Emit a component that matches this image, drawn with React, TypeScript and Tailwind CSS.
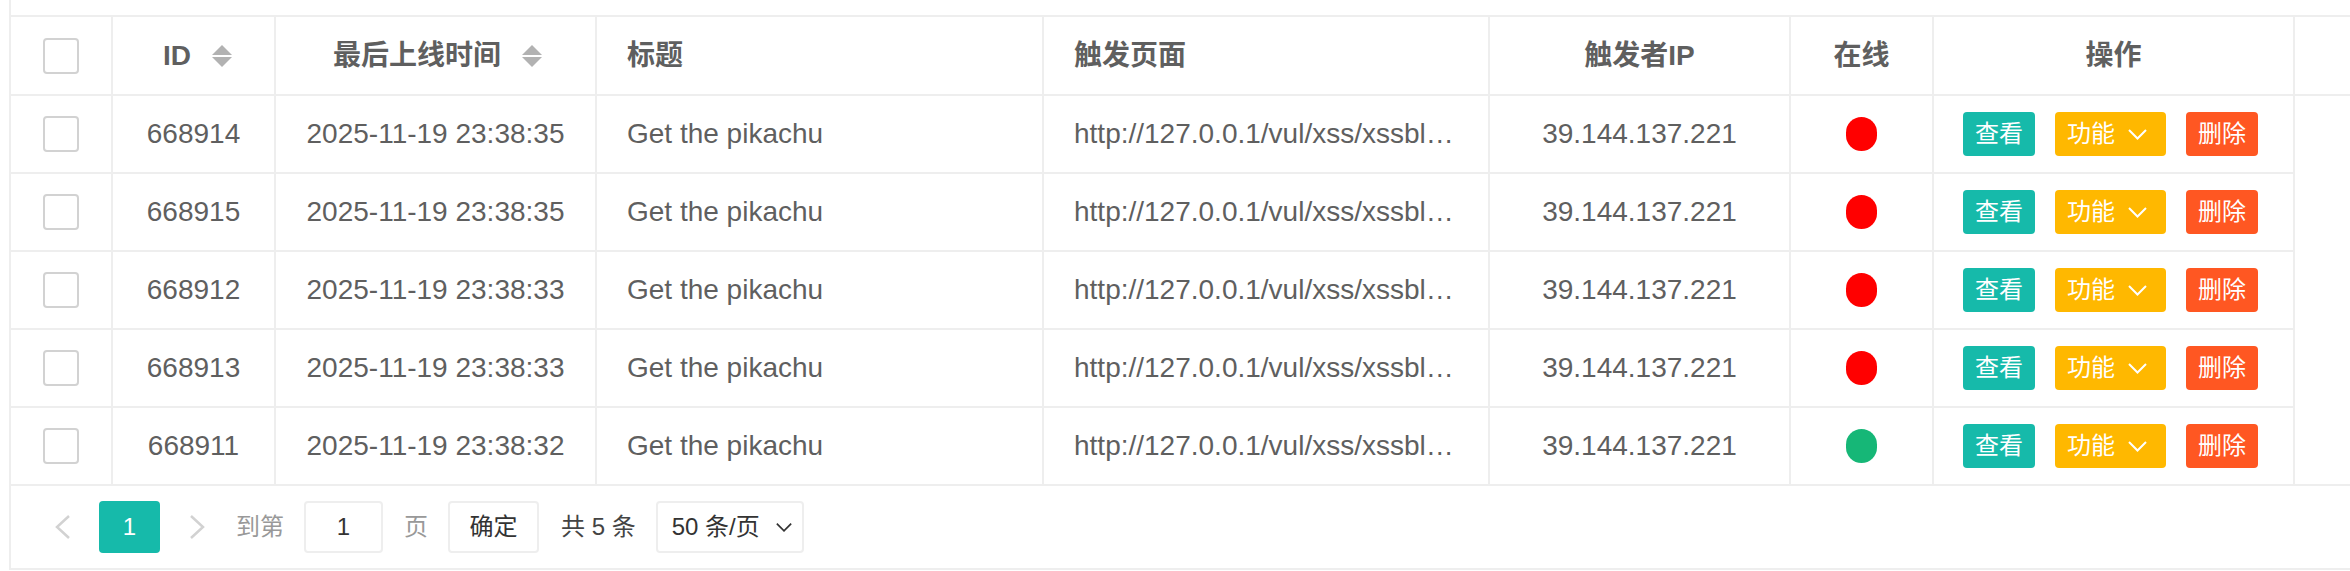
import type { ReactNode } from "react";

type Row = {
  id: string;
  time: string;
  title: string;
  url: string;
  ip: string;
  online: boolean;
};

const URL_SHOWN = "http://127.0.0.1/vul/xss/xssbl…";

const ROWS: Row[] = [
  { id: "668914", time: "2025-11-19 23:38:35", title: "Get the pikachu", url: URL_SHOWN, ip: "39.144.137.221", online: false },
  { id: "668915", time: "2025-11-19 23:38:35", title: "Get the pikachu", url: URL_SHOWN, ip: "39.144.137.221", online: false },
  { id: "668912", time: "2025-11-19 23:38:33", title: "Get the pikachu", url: URL_SHOWN, ip: "39.144.137.221", online: false },
  { id: "668913", time: "2025-11-19 23:38:33", title: "Get the pikachu", url: URL_SHOWN, ip: "39.144.137.221", online: false },
  { id: "668911", time: "2025-11-19 23:38:32", title: "Get the pikachu", url: URL_SHOWN, ip: "39.144.137.221", online: true },
];

const SortIcon = () => (
  <svg width="20" height="22" viewBox="0 0 20 22" className="ml-[21px] shrink-0" aria-hidden="true">
    <polygon points="0,10 10,0 20,10" fill="#b2b2b2" />
    <polygon points="0,12 20,12 10,22" fill="#b2b2b2" />
  </svg>
);

const Checkbox = () => (
  <span className="block h-[36px] w-[36px] rounded-[4px] border-2 border-[#d2d2d2] bg-white" />
);

const Chevron = ({ className, color }: { className?: string; color: string }) => (
  <svg width="19" height="11" viewBox="0 0 19 11" className={className} aria-hidden="true">
    <polyline points="1,1 9.5,9.5 18,1" fill="none" stroke={color} strokeWidth="2" />
  </svg>
);

const Arrow = ({ dir }: { dir: "left" | "right" }) => (
  <svg width="17" height="24" viewBox="0 0 17 24" aria-hidden="true">
    <polyline
      points={dir === "left" ? "15,1 3,12 15,23" : "2,1 14,12 2,23"}
      fill="none"
      stroke="#d2d2d2"
      strokeWidth="2.5"
    />
  </svg>
);

const Cell = ({
  width,
  align = "center",
  pad = "px-[30px]",
  children,
}: {
  width: string;
  align?: "center" | "left";
  pad?: string;
  children?: ReactNode;
}) => (
  <div
    className={`flex h-full min-w-0 shrink-0 items-center border-r-2 border-[#eee] ${width} ${pad} ${
      align === "center" ? "justify-center" : "justify-start"
    }`}>
    {children}
  </div>
);

const W = ["w-[102px]", "w-[163px]", "w-[321px]", "w-[447px]", "w-[446px]", "w-[301px]", "w-[143px]", "w-[361px]"];

export default function App() {
  return (
    <div className="h-[571px] w-[2350px] overflow-hidden bg-white font-['Liberation_Sans','Noto_Sans_CJK_SC',sans-serif] text-[28px] text-[#5f5f5f]">
      <div className="ml-[9px] w-[2345px] border-x-2 border-b-2 border-[#eee]">
        <div className="h-[17px] border-b-2 border-[#eee]" />

        {/* header */}
        <div className="flex h-[79px] border-b-2 border-[#eee] font-bold leading-none">
          <Cell width={W[0]}>
            <Checkbox />
          </Cell>
          <Cell width={W[1]} pad="pl-[38px] pr-[30px]">
            <span>ID</span>
            <SortIcon />
          </Cell>
          <Cell width={W[2]} pad="pl-[34px] pr-[30px]">
            <span>最后上线时间</span>
            <SortIcon />
          </Cell>
          <Cell width={W[3]} align="left">
            标题
          </Cell>
          <Cell width={W[4]} align="left">
            触发页面
          </Cell>
          <Cell width={W[5]}>触发者IP</Cell>
          <Cell width={W[6]}>在线</Cell>
          <Cell width={W[7]}>操作</Cell>
        </div>

        {/* body */}
        {ROWS.map((row, i) => (
          <div
            key={row.id}
            className={`flex w-[2284px] leading-none ${
              i === ROWS.length - 1 ? "h-[76px]" : "h-[78px] border-b-2 border-[#eee]"
            }`}>
            <Cell width={W[0]}>
              <Checkbox />
            </Cell>
            <Cell width={W[1]}>{row.id}</Cell>
            <Cell width={W[2]}>
              <span className="whitespace-nowrap">{row.time}</span>
            </Cell>
            <Cell width={W[3]} align="left">
              {row.title}
            </Cell>
            <Cell width={W[4]} align="left">
              <span className="whitespace-nowrap">{row.url}</span>
            </Cell>
            <Cell width={W[5]}>{row.ip}</Cell>
            <Cell width={W[6]}>
              <span
                className={`block h-[34px] w-[31px] rounded-full ${
                  row.online ? "bg-[#16b777]" : "bg-[#ff0000]"
                }`}
              />
            </Cell>
            <Cell width={W[7]} align="left" pad="pl-[29px]">
              <div className="flex items-center gap-[20px] text-[24px] text-white">
                <button
                  type="button"
                  className="flex h-[44px] w-[72px] items-center justify-center rounded-[4px] bg-[#16baaa]">
                  查看
                </button>
                <button
                  type="button"
                  className="flex h-[44px] w-[111px] items-center rounded-[4px] bg-[#ffb800] pl-[12px]">
                  <span>功能</span>
                  <Chevron className="ml-[13px]" color="#ffffff" />
                </button>
                <button
                  type="button"
                  className="flex h-[44px] w-[72px] items-center justify-center rounded-[4px] bg-[#ff5722]">
                  删除
                </button>
              </div>
            </Cell>
          </div>
        ))}

        {/* pager */}
        <div className="flex h-[84px] items-center border-t-2 border-[#eee] pl-[14px] text-[24px] leading-none">
          <span className="flex h-[52px] w-[74px] items-center justify-center">
            <Arrow dir="left" />
          </span>
          <span className="flex h-[52px] w-[61px] items-center justify-center rounded-[4px] bg-[#16baaa] text-white">
            1
          </span>
          <span className="flex h-[52px] w-[74px] items-center justify-center">
            <Arrow dir="right" />
          </span>
          <span className="ml-[2px] text-[#999]">到第</span>
          <span className="ml-[20px] flex h-[52px] w-[79px] items-center justify-center rounded-[4px] border-2 border-[#eee] text-[#333]">
            1
          </span>
          <span className="ml-[21px] text-[#999]">页</span>
          <button
            type="button"
            className="ml-[20px] flex h-[52px] w-[91px] items-center justify-center rounded-[4px] border-2 border-[#eee] text-[#333]">
            确定
          </button>
          <span className="ml-[22px] whitespace-pre text-[#444]">共 5 条</span>
          <span className="ml-[20px] flex h-[52px] w-[148px] items-center rounded-[4px] border-2 border-[#eee] pl-[14px] text-[#333]">
            <span className="whitespace-pre">50 条/页</span>
            <Chevron className="ml-auto mr-[10px] w-[16px]" color="#333333" />
          </span>
        </div>
      </div>
    </div>
  );
}
